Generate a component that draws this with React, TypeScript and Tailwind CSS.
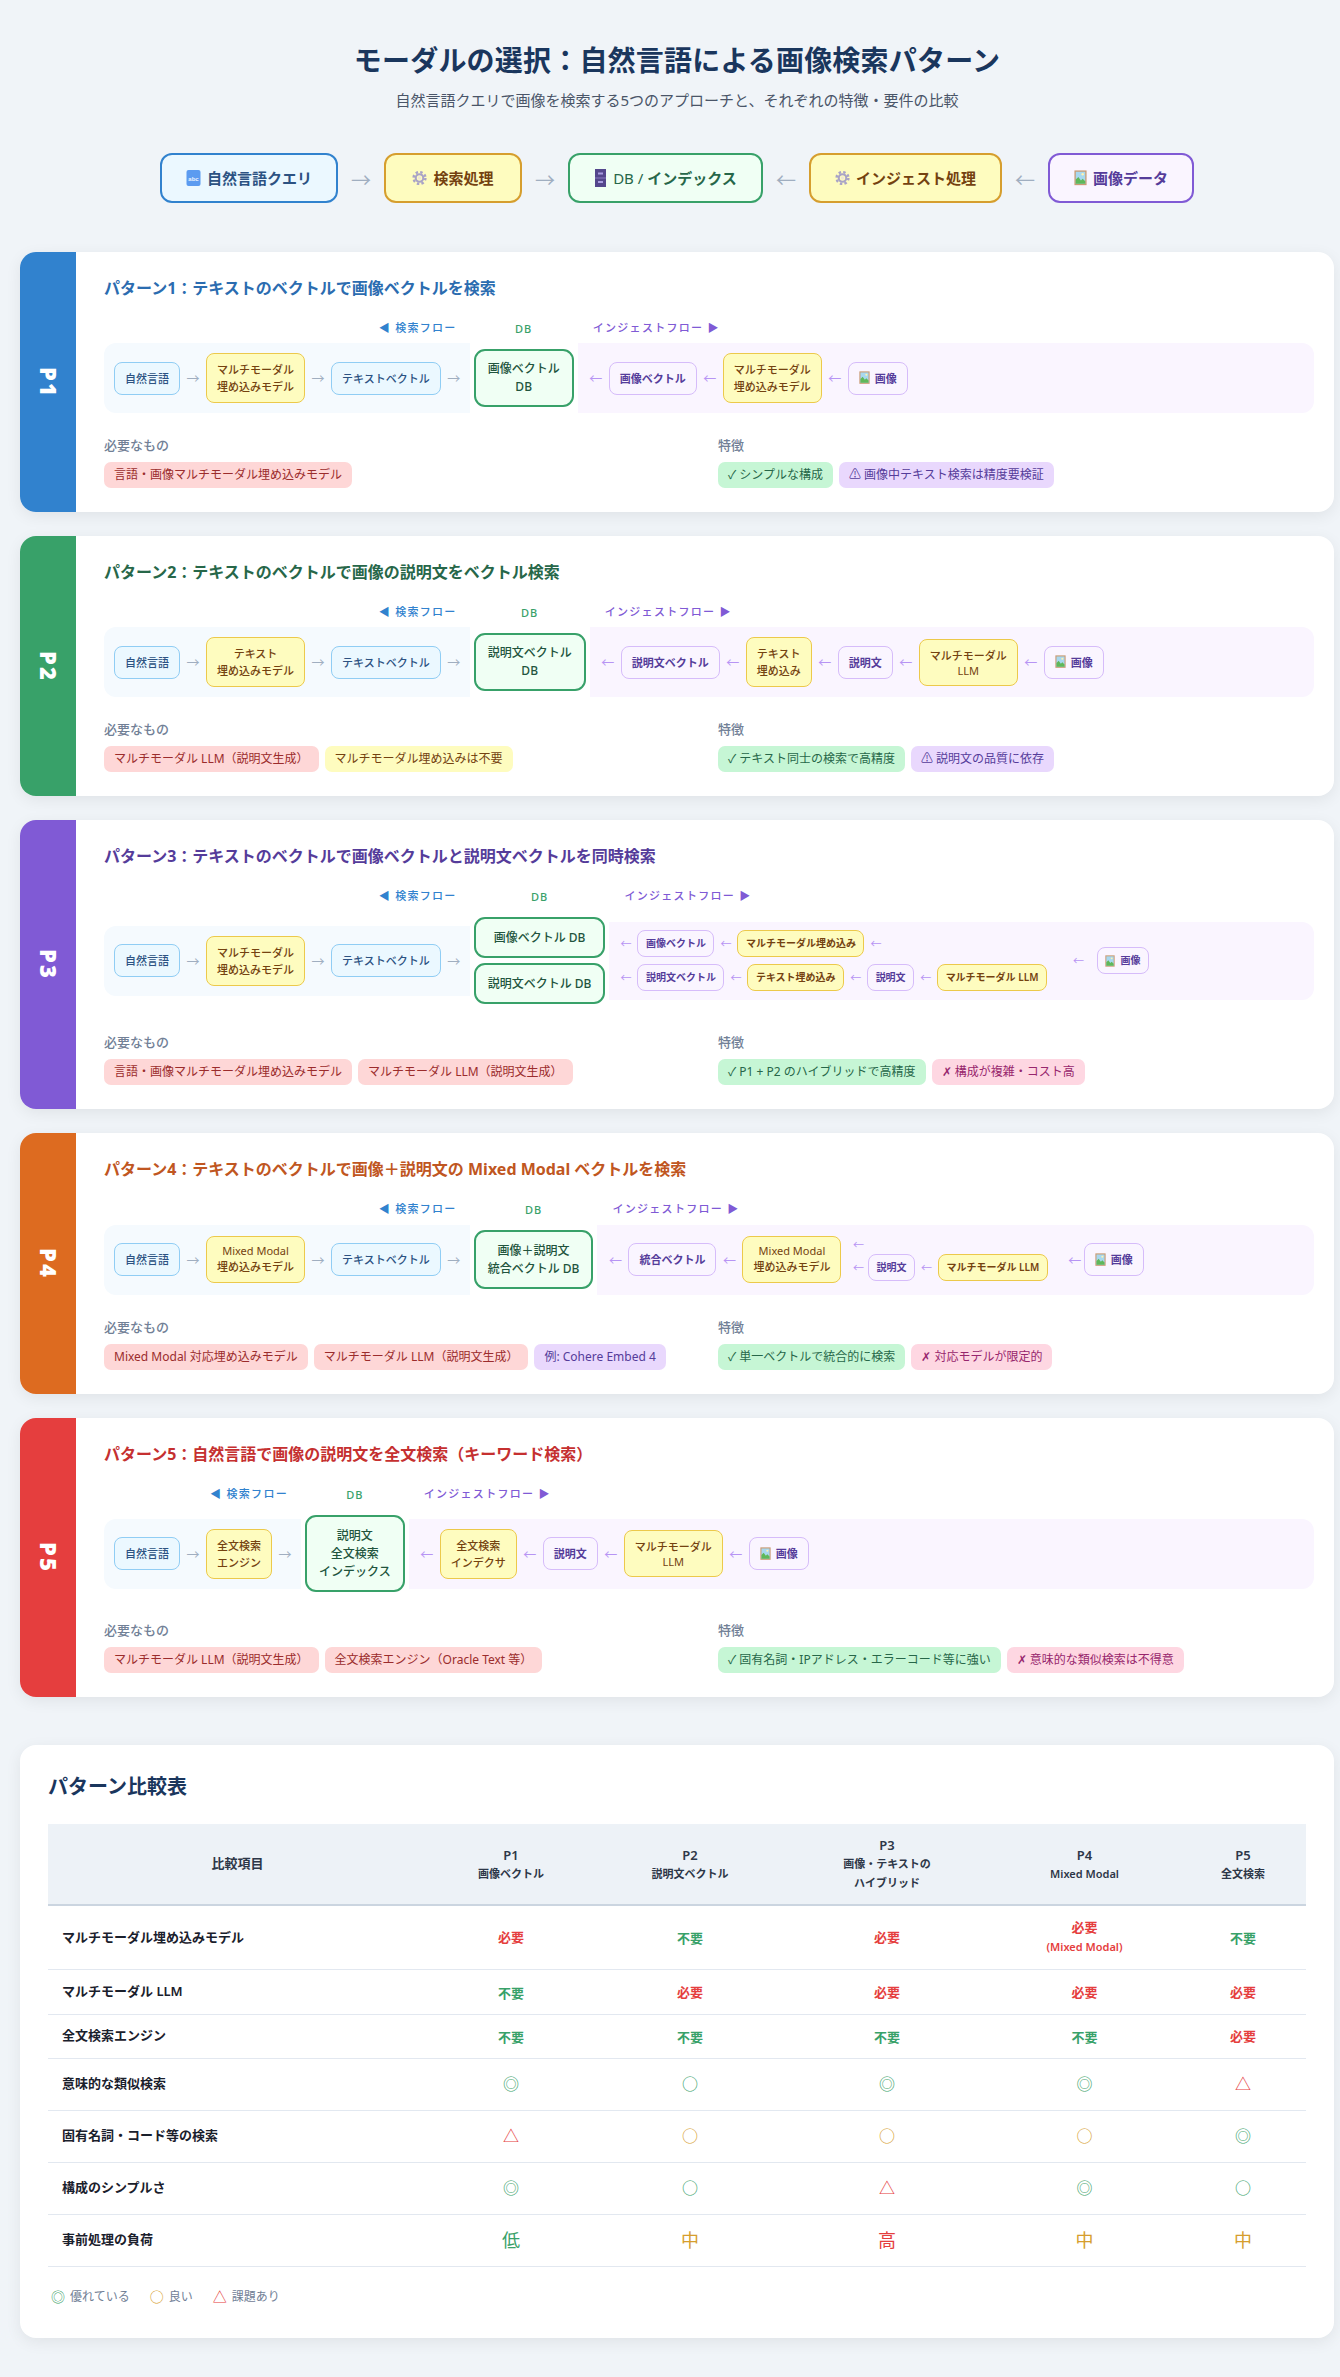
import type { ReactNode } from "react";

type Tone = "blue" | "yellow" | "purple";
type TagTone = "red" | "yellow" | "green" | "purple" | "pink";

const nodeTones: Record<Tone, string> = {
  blue: "border-[#90cdf4] bg-[#ebf8ff] text-[#2c5282] font-medium",
  yellow: "border-[#ecc94b] bg-[#fefcbf] text-[#744210] font-medium",
  purple: "border-[#d6bcfa] bg-[#faf5ff] text-[#553c9a] font-semibold"
};

const tagTones: Record<TagTone, string> = {
  red: "bg-[#fed7d7] text-[#9b2c2c]",
  yellow: "bg-[#fefcbf] text-[#744210]",
  green: "bg-[#c6f6d5] text-[#276749]",
  purple: "bg-[#e9d8fd] text-[#553c9a]",
  pink: "bg-[#fed7e2] text-[#97266d]"
};

function AbcIcon() {
  return (
    <svg width="15" height="18" viewBox="0 0 15 18" className="shrink-0">
      <rect x="0.5" y="1" width="14" height="16" rx="2" fill="#5b9bf0" />
      <text x="7.5" y="11.5" textAnchor="middle" fontSize="6" fontWeight="700" fill="#eaf3ff" fontFamily="Liberation Sans, sans-serif">abc</text>
    </svg>
  );
}

function GearIcon() {
  return (
    <svg width="15" height="16" viewBox="0 0 16 16" className="shrink-0">
      <circle cx="8" cy="8" r="6.3" fill="none" stroke="#a9a3c6" strokeWidth="2.6" strokeDasharray="2.6 2.35" />
      <circle cx="8" cy="8" r="4" fill="none" stroke="#a9a3c6" strokeWidth="2.2" />
      <circle cx="8" cy="8" r="1.8" fill="#efe6d8" />
    </svg>
  );
}

function CabinetIcon() {
  return (
    <svg width="13" height="20" viewBox="0 0 13 20" className="shrink-0">
      <rect x="1" y="1" width="11" height="18" fill="#54478c" />
      <rect x="1" y="9.5" width="11" height="1" fill="#8a7cc0" />
      <rect x="4" y="4.5" width="5" height="2" fill="#a99de0" />
      <rect x="4" y="13" width="5" height="2" fill="#a99de0" />
    </svg>
  );
}

function PictureIcon({ size = 13 }: { size?: number }) {
  return (
    <svg width={size} height={size * 1.2} viewBox="0 0 15 18" className="shrink-0">
      <rect x="0.5" y="0.5" width="14" height="17" fill="#c99a72" />
      <rect x="2" y="2" width="11" height="14" fill="#a8d8ef" />
      <path d="M2 16v-5l3-3 3 4 2-2 3 3v3z" fill="#5fb85a" />
      <circle cx="10" cy="5" r="1.4" fill="#fff3b0" />
    </svg>
  );
}

function Arrow({ dir = "right", tone = "blue", small = false, className = "" }: { dir?: "left" | "right"; tone?: "blue" | "purple"; small?: boolean; className?: string }) {
  return (
    <span
      className={`shrink-0 text-center ${small ? "w-[23px] text-[11px] leading-[14px]" : "w-[26px] text-[13px] leading-[18px]"} ${tone === "blue" ? "text-[#a0aec0]" : "text-[#b794f4]"} ${className}`}
    >
      {dir === "right" ? "→" : "←"}
    </span>
  );
}

function FlowNode({ lines, tone, small = false, icon = false }: { lines: string[]; tone: Tone; small?: boolean; icon?: boolean }) {
  return (
    <div
      className={`shrink-0 rounded-[8px] border text-center ${small ? "px-[7.5px] py-[5px] text-[10px]" : "px-[10px] py-[7px] text-[11px]"} ${nodeTones[tone]}`}
    >
      {lines.map((line) => (
        <div
          key={line}
          className={`flex items-center justify-center gap-[5px] ${small ? "leading-[15px] font-semibold" : /^[\x20-\x7e]+$/.test(line) ? "leading-[14px] font-normal" : "leading-[17px]"}`}
        >
          {icon && <PictureIcon size={small ? 10 : 11} />}
          {line}
        </div>
      ))}
    </div>
  );
}

function DbNode({ lines, heightClass }: { lines: string[]; heightClass: string }) {
  return (
    <div className={`flex flex-col items-center justify-center rounded-[11px] border-2 border-[#38a169] bg-[#f0fff4] px-3 text-center text-[12px] font-medium leading-[18px] text-[#22543d] ${heightClass}`}>
      {lines.map((line) => (
        <div key={line}>{line}</div>
      ))}
    </div>
  );
}

function Tag({ tone, children }: { tone: TagTone; children: ReactNode }) {
  return <span className={`rounded-[7px] px-[10px] py-[4px] text-[12px] leading-[18px] ${tagTones[tone]}`}>{children}</span>;
}

function Pattern({
  id,
  bandClass,
  titleClass,
  title,
  search,
  db,
  ingest,
  needs,
  traits
}: {
  id: string;
  bandClass: string;
  titleClass: string;
  title: string;
  search: ReactNode;
  db: ReactNode;
  ingest: ReactNode;
  needs: ReactNode;
  traits: ReactNode;
}) {
  return (
    <section className="flex overflow-hidden rounded-[16px] bg-white shadow-[0_4px_16px_rgba(0,0,0,0.07)]">
      <div className={`flex w-[56px] shrink-0 items-center justify-center ${bandClass}`}>
        <span className="text-[22px] font-black tracking-[2px] text-white [writing-mode:vertical-rl]">{id}</span>
      </div>
      <div className="min-w-0 flex-1 pt-6 pr-5 pb-6 pl-7">
        <h3 className={`mb-5 text-[16px] font-bold leading-[24px] ${titleClass}`}>{title}</h3>
        <div className="grid grid-cols-[auto_auto_1fr] gap-y-[13px]">
          <div className="justify-self-end pr-[13px] text-[11px] font-medium leading-[16px] tracking-[1.3px] text-[#3182ce]">◀ 検索フロー</div>
          <div className="translate-y-[1px] text-center text-[11px] font-medium leading-[16px] tracking-[1px] text-[#38a169]">DB</div>
          <div className="pl-[15px] text-[11px] font-medium leading-[16px] tracking-[1.3px] text-[#805ad5]">インジェストフロー ▶</div>
          <div className="-my-[10px] flex min-h-[70px] items-center self-center rounded-l-[12px] bg-[#f5fafe] py-[8.5px] pr-[3px] pl-[10px]">{search}</div>
          <div className="mx-1 flex flex-col justify-center gap-[5px]">{db}</div>
          <div className="-my-[10px] flex min-h-[70px] items-center self-center rounded-r-[12px] bg-[#faf5ff] py-[8.5px] pl-[5px]">{ingest}</div>
        </div>
        <div className="mt-[29px] grid grid-cols-2 gap-x-[18px]">
          <div>
            <div className="mb-2 text-[13px] font-medium leading-[18px] text-[#718096]">必要なもの</div>
            <div className="flex flex-wrap gap-[6px]">{needs}</div>
          </div>
          <div>
            <div className="mb-2 text-[13px] font-medium leading-[18px] text-[#718096]">特徴</div>
            <div className="flex flex-wrap gap-[6px]">{traits}</div>
          </div>
        </div>
      </div>
    </section>
  );
}

function SummaryItem({ className, icon, label }: { className: string; icon: ReactNode; label: ReactNode }) {
  return (
    <div className={`flex h-[50px] items-center justify-center gap-[6px] rounded-[12px] border-2 px-6 text-[15px] font-semibold ${className}`}>
      {icon}
      <span>{label}</span>
    </div>
  );
}

function SummaryArrow({ children }: { children: string }) {
  return <span className="mt-[6px] w-[46px] text-center text-[20px] text-[#a0aec0]">{children}</span>;
}

const rows: { label: string; cells: ReactNode[]; heightClass: string }[] = [
  {
    label: "マルチモーダル埋め込みモデル",
    heightClass: "h-[64px]",
    cells: [<Need />, <NoNeed />, <Need />, <Need sub="(Mixed Modal)" />, <NoNeed />]
  },
  { label: "マルチモーダル LLM", heightClass: "h-[45px]", cells: [<NoNeed />, <Need />, <Need />, <Need />, <Need />] },
  { label: "全文検索エンジン", heightClass: "h-[44px]", cells: [<NoNeed />, <NoNeed />, <NoNeed />, <NoNeed />, <Need />] },
  {
    label: "意味的な類似検索",
    heightClass: "h-[52px]",
    cells: [<Mark c="◎" t="g" />, <Mark c="○" t="g" />, <Mark c="◎" t="g" />, <Mark c="◎" t="g" />, <Mark c="△" t="r" />]
  },
  {
    label: "固有名詞・コード等の検索",
    heightClass: "h-[52px]",
    cells: [<Mark c="△" t="r" />, <Mark c="○" t="o" />, <Mark c="○" t="o" />, <Mark c="○" t="o" />, <Mark c="◎" t="g" />]
  },
  {
    label: "構成のシンプルさ",
    heightClass: "h-[52px]",
    cells: [<Mark c="◎" t="g" />, <Mark c="○" t="g" />, <Mark c="△" t="r" />, <Mark c="◎" t="g" />, <Mark c="○" t="g" />]
  },
  {
    label: "事前処理の負荷",
    heightClass: "h-[52px]",
    cells: [<Mark c="低" t="g" />, <Mark c="中" t="o" />, <Mark c="高" t="r" />, <Mark c="中" t="o" />, <Mark c="中" t="o" />]
  }
];

function Need({ sub }: { sub?: string }) {
  return (
    <div className="text-[13px] font-semibold leading-[20px] text-[#e53e3e]">
      必要
      {sub && <div className="text-[11px] leading-[20px]">{sub}</div>}
    </div>
  );
}

function NoNeed() {
  return <span className="text-[13px] font-semibold text-[#38a169]">不要</span>;
}

function Mark({ c, t }: { c: string; t: "g" | "o" | "r" }) {
  const color = t === "g" ? "text-[#38a169]" : t === "o" ? "text-[#d69e2e]" : "text-[#e53e3e]";
  return <span className={`${"◎○△".includes(c) ? "text-[16px]" : "text-[18px]"} ${color}`}>{c}</span>;
}

const headers: { p: string; sub: string[]; width: string }[] = [
  { p: "P1", sub: ["画像ベクトル"], width: "w-[168px]" },
  { p: "P2", sub: ["説明文ベクトル"], width: "w-[190px]" },
  { p: "P3", sub: ["画像・テキストの", "ハイブリッド"], width: "w-[204px]" },
  { p: "P4", sub: ["Mixed Modal"], width: "w-[191px]" },
  { p: "P5", sub: ["全文検索"], width: "" }
];

export default function App() {
  return (
    <div className="min-h-screen bg-[#f0f4f8] pt-10 pr-[6px] pb-10 pl-5 font-['Noto_Sans','Noto_Sans_CJK_JP',sans-serif]">
      <h1 className="text-center text-[28px] font-bold leading-[40px] tracking-[0.2px] text-[#1a365d]">モーダルの選択：自然言語による画像検索パターン</h1>
      <p className="mt-[9px] text-center text-[15px] leading-[22px] text-[#4a5568]">自然言語クエリで画像を検索する5つのアプローチと、それぞれの特徴・要件の比較</p>

      <div className="mt-[42px] mb-[49px] flex items-center justify-center">
        <SummaryItem className="border-[#3182ce] bg-[#ebf8ff] text-[#2c5282]" icon={<AbcIcon />} label="自然言語クエリ" />
        <SummaryArrow>→</SummaryArrow>
        <SummaryItem className="min-w-[138px] border-[#d69e2e] bg-[#fefcbf] text-[#744210]" icon={<GearIcon />} label="検索処理" />
        <SummaryArrow>→</SummaryArrow>
        <SummaryItem
          className="min-w-[195px] border-[#38a169] bg-[#f0fff4] text-[#276749]"
          icon={<CabinetIcon />}
          label={
            <>
              <span className="font-normal">DB / </span>インデックス
            </>
          }
        />
        <SummaryArrow>←</SummaryArrow>
        <SummaryItem className="min-w-[191px] border-[#d69e2e] bg-[#fefcbf] text-[#744210]" icon={<GearIcon />} label="インジェスト処理" />
        <SummaryArrow>←</SummaryArrow>
        <SummaryItem className="border-[#805ad5] bg-[#faf5ff] text-[#553c9a]" icon={<PictureIcon size={13} />} label="画像データ" />
      </div>

      <div className="flex flex-col gap-6">
        <Pattern
          id="P1"
          bandClass="bg-[#3182ce]"
          titleClass="text-[#2b6cb0]"
          title="パターン1：テキストのベクトルで画像ベクトルを検索"
          search={
            <>
              <FlowNode tone="blue" lines={["自然言語"]} />
              <Arrow />
              <FlowNode tone="yellow" lines={["マルチモーダル", "埋め込みモデル"]} />
              <Arrow />
              <FlowNode tone="blue" lines={["テキストベクトル"]} />
              <Arrow />
            </>
          }
          db={<DbNode lines={["画像ベクトル", "DB"]} heightClass="h-[58px]" />}
          ingest={
            <>
              <Arrow dir="left" tone="purple" />
              <FlowNode tone="purple" lines={["画像ベクトル"]} />
              <Arrow dir="left" tone="purple" />
              <FlowNode tone="yellow" lines={["マルチモーダル", "埋め込みモデル"]} />
              <Arrow dir="left" tone="purple" />
              <FlowNode tone="purple" lines={["画像"]} icon />
            </>
          }
          needs={<Tag tone="red">言語・画像マルチモーダル埋め込みモデル</Tag>}
          traits={
            <>
              <Tag tone="green">✓ シンプルな構成</Tag>
              <Tag tone="purple">⚠ 画像中テキスト検索は精度要検証</Tag>
            </>
          }
        />

        <Pattern
          id="P2"
          bandClass="bg-[#38a169]"
          titleClass="text-[#276749]"
          title="パターン2：テキストのベクトルで画像の説明文をベクトル検索"
          search={
            <>
              <FlowNode tone="blue" lines={["自然言語"]} />
              <Arrow />
              <FlowNode tone="yellow" lines={["テキスト", "埋め込みモデル"]} />
              <Arrow />
              <FlowNode tone="blue" lines={["テキストベクトル"]} />
              <Arrow />
            </>
          }
          db={<DbNode lines={["説明文ベクトル", "DB"]} heightClass="h-[58px]" />}
          ingest={
            <>
              <Arrow dir="left" tone="purple" />
              <FlowNode tone="purple" lines={["説明文ベクトル"]} />
              <Arrow dir="left" tone="purple" />
              <FlowNode tone="yellow" lines={["テキスト", "埋め込み"]} />
              <Arrow dir="left" tone="purple" />
              <FlowNode tone="purple" lines={["説明文"]} />
              <Arrow dir="left" tone="purple" />
              <FlowNode tone="yellow" lines={["マルチモーダル", "LLM"]} />
              <Arrow dir="left" tone="purple" />
              <FlowNode tone="purple" lines={["画像"]} icon />
            </>
          }
          needs={
            <>
              <Tag tone="red">マルチモーダル LLM（説明文生成）</Tag>
              <Tag tone="yellow">マルチモーダル埋め込みは不要</Tag>
            </>
          }
          traits={
            <>
              <Tag tone="green">✓ テキスト同士の検索で高精度</Tag>
              <Tag tone="purple">⚠ 説明文の品質に依存</Tag>
            </>
          }
        />

        <Pattern
          id="P3"
          bandClass="bg-[#805ad5]"
          titleClass="text-[#553c9a]"
          title="パターン3：テキストのベクトルで画像ベクトルと説明文ベクトルを同時検索"
          search={
            <>
              <FlowNode tone="blue" lines={["自然言語"]} />
              <Arrow />
              <FlowNode tone="yellow" lines={["マルチモーダル", "埋め込みモデル"]} />
              <Arrow />
              <FlowNode tone="blue" lines={["テキストベクトル"]} />
              <Arrow />
            </>
          }
          db={
            <>
              <DbNode lines={["画像ベクトル DB"]} heightClass="h-[41px]" />
              <DbNode lines={["説明文ベクトル DB"]} heightClass="h-[41px]" />
            </>
          }
          ingest={
            <>
              <div className="flex flex-col gap-[7px]">
                <div className="flex items-center">
                  <Arrow dir="left" tone="purple" small />
                  <FlowNode small tone="purple" lines={["画像ベクトル"]} />
                  <Arrow dir="left" tone="purple" small />
                  <FlowNode small tone="yellow" lines={["マルチモーダル埋め込み"]} />
                  <Arrow dir="left" tone="purple" small />
                </div>
                <div className="flex items-center">
                  <Arrow dir="left" tone="purple" small />
                  <FlowNode small tone="purple" lines={["説明文ベクトル"]} />
                  <Arrow dir="left" tone="purple" small />
                  <FlowNode small tone="yellow" lines={["テキスト埋め込み"]} />
                  <Arrow dir="left" tone="purple" small />
                  <FlowNode small tone="purple" lines={["説明文"]} />
                  <Arrow dir="left" tone="purple" small />
                  <FlowNode small tone="yellow" lines={["マルチモーダル LLM"]} />
                </div>
              </div>
              <Arrow dir="left" tone="purple" small className="ml-[20px] mr-[7px]" />
              <FlowNode small tone="purple" lines={["画像"]} icon />
            </>
          }
          needs={
            <>
              <Tag tone="red">言語・画像マルチモーダル埋め込みモデル</Tag>
              <Tag tone="red">マルチモーダル LLM（説明文生成）</Tag>
            </>
          }
          traits={
            <>
              <Tag tone="green">✓ P1 + P2 のハイブリッドで高精度</Tag>
              <Tag tone="pink">✗ 構成が複雑・コスト高</Tag>
            </>
          }
        />

        <Pattern
          id="P4"
          bandClass="bg-[#dd6b20]"
          titleClass="text-[#c05621]"
          title="パターン4：テキストのベクトルで画像＋説明文の Mixed Modal ベクトルを検索"
          search={
            <>
              <FlowNode tone="blue" lines={["自然言語"]} />
              <Arrow />
              <FlowNode tone="yellow" lines={["Mixed Modal", "埋め込みモデル"]} />
              <Arrow />
              <FlowNode tone="blue" lines={["テキストベクトル"]} />
              <Arrow />
            </>
          }
          db={<DbNode lines={["画像＋説明文", "統合ベクトル DB"]} heightClass="h-[59px]" />}
          ingest={
            <>
              <Arrow dir="left" tone="purple" />
              <FlowNode tone="purple" lines={["統合ベクトル"]} />
              <Arrow dir="left" tone="purple" />
              <FlowNode tone="yellow" lines={["Mixed Modal", "埋め込みモデル"]} />
              <div className="ml-[5.5px] flex flex-col gap-[2px]">
                <Arrow dir="left" tone="purple" small />
                <div className="flex items-center">
                  <Arrow dir="left" tone="purple" small className="mr-[-2px]" />
                  <FlowNode small tone="purple" lines={["説明文"]} />
                  <Arrow dir="left" tone="purple" small />
                  <FlowNode small tone="yellow" lines={["マルチモーダル LLM"]} />
                </div>
              </div>
              <Arrow dir="left" tone="purple" className="ml-[14px] mr-[-4px]" />
              <FlowNode tone="purple" lines={["画像"]} icon />
            </>
          }
          needs={
            <>
              <Tag tone="red">Mixed Modal 対応埋め込みモデル</Tag>
              <Tag tone="red">マルチモーダル LLM（説明文生成）</Tag>
              <Tag tone="purple">例: Cohere Embed 4</Tag>
            </>
          }
          traits={
            <>
              <Tag tone="green">✓ 単一ベクトルで統合的に検索</Tag>
              <Tag tone="pink">✗ 対応モデルが限定的</Tag>
            </>
          }
        />

        <Pattern
          id="P5"
          bandClass="bg-[#e53e3e]"
          titleClass="text-[#c53030]"
          title="パターン5：自然言語で画像の説明文を全文検索（キーワード検索）"
          search={
            <>
              <FlowNode tone="blue" lines={["自然言語"]} />
              <Arrow />
              <FlowNode tone="yellow" lines={["全文検索", "エンジン"]} />
              <Arrow />
            </>
          }
          db={<DbNode lines={["説明文", "全文検索", "インデックス"]} heightClass="h-[77px]" />}
          ingest={
            <>
              <Arrow dir="left" tone="purple" />
              <FlowNode tone="yellow" lines={["全文検索", "インデクサ"]} />
              <Arrow dir="left" tone="purple" />
              <FlowNode tone="purple" lines={["説明文"]} />
              <Arrow dir="left" tone="purple" />
              <FlowNode tone="yellow" lines={["マルチモーダル", "LLM"]} />
              <Arrow dir="left" tone="purple" />
              <FlowNode tone="purple" lines={["画像"]} icon />
            </>
          }
          needs={
            <>
              <Tag tone="red">マルチモーダル LLM（説明文生成）</Tag>
              <Tag tone="red">全文検索エンジン（Oracle Text 等）</Tag>
            </>
          }
          traits={
            <>
              <Tag tone="green">✓ 固有名詞・IPアドレス・エラーコード等に強い</Tag>
              <Tag tone="pink">✗ 意味的な類似検索は不得意</Tag>
            </>
          }
        />
      </div>

      <section className="mt-12 rounded-[16px] bg-white px-7 pt-7 pb-8 shadow-[0_4px_16px_rgba(0,0,0,0.07)]">
        <h2 className="mb-[23px] text-[20px] font-bold leading-[28px] text-[#1a365d]">パターン比較表</h2>
        <table className="w-full table-fixed border-collapse">
          <thead>
            <tr className="h-[81px] border-b-2 border-[#cbd5e0] bg-[#edf2f7] text-center text-[#2d3748]">
              <th className="w-[379px] text-[13px] font-semibold">比較項目</th>
              {headers.map((h) => (
                <th key={h.p} className={`font-semibold ${h.width}`}>
                  <div className="text-[13px] leading-[18px]">{h.p}</div>
                  {h.sub.map((s) => (
                    <div key={s} className="text-[11px] leading-[19px]">
                      {s}
                    </div>
                  ))}
                </th>
              ))}
            </tr>
          </thead>
          <tbody>
            {rows.map((row) => (
              <tr key={row.label} className={`border-b border-[#e2e8f0] ${row.heightClass}`}>
                <td className="pl-[14px] text-[13px] font-semibold text-[#1a202c]">{row.label}</td>
                {row.cells.map((cell, i) => (
                  <td key={i} className="text-center">
                    {cell}
                  </td>
                ))}
              </tr>
            ))}
          </tbody>
        </table>
        <div className="mt-[21px] flex items-center gap-[20px] pl-[3px] text-[12px] leading-[18px] text-[#718096]">
          <span className="flex items-center gap-[5px]">
            <span className="text-[14px] text-[#38a169]">◎</span>優れている
          </span>
          <span className="flex items-center gap-[5px]">
            <span className="text-[14px] text-[#d69e2e]">○</span>良い
          </span>
          <span className="flex items-center gap-[5px]">
            <span className="text-[14px] text-[#e53e3e]">△</span>課題あり
          </span>
        </div>
      </section>
    </div>
  );
}
